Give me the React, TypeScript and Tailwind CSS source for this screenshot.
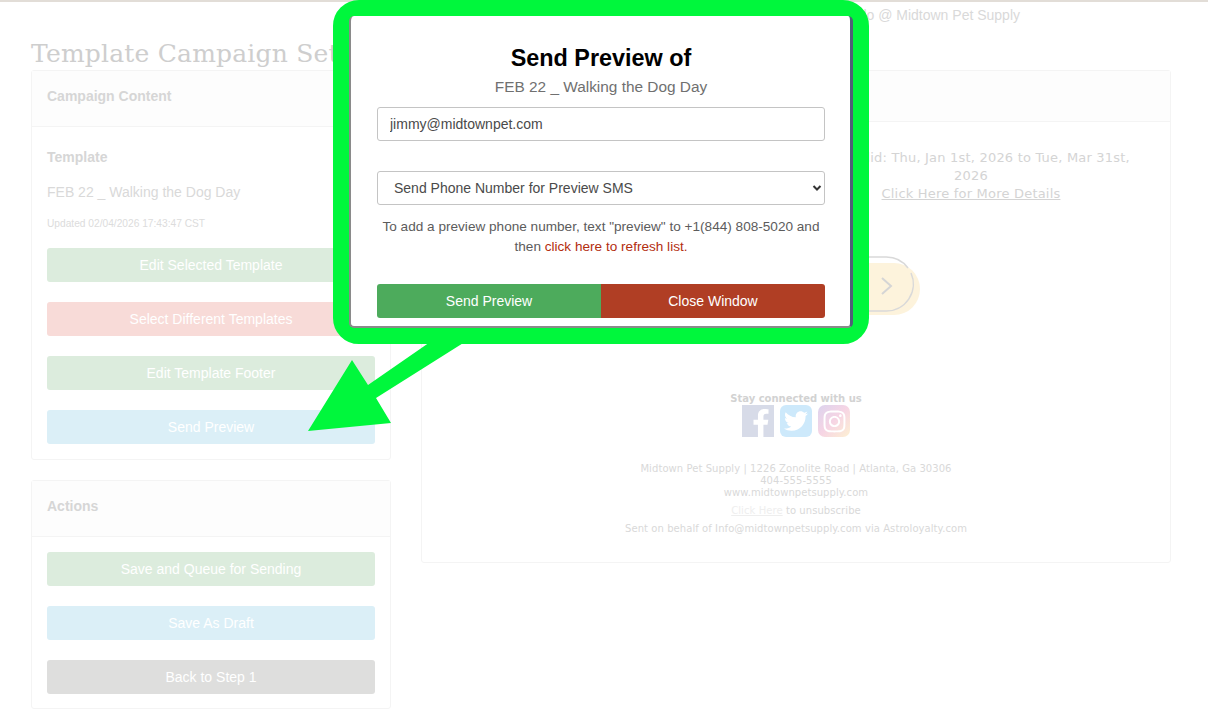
import React from 'react';
import { FaFacebookF, FaTwitter, FaInstagram } from 'react-icons/fa';

const sans = "font-['Liberation_Sans',Arial,sans-serif]";
const verdana = "font-['DejaVu_Sans',Verdana,sans-serif]";

const ActionButton: React.FC<{ label: string; className: string }> = ({ label, className }) => (
  <button className={`h-[34px] w-full rounded-[3px] text-sm text-white ${className}`}>{label}</button>
);

const CardHeader: React.FC<{ title?: string; className?: string }> = ({ title, className }) => (
  <div className={`flex items-center border-b border-[#f4f4f4] bg-[#fdfdfd] px-[15px] text-sm font-bold text-[#d6d6d6] ${className}`}>
    {title}
  </div>
);

const SocialIcons = () => (
  <div className="flex justify-center gap-[6px]">
    <div className="flex h-[32px] w-[32px] items-end justify-center overflow-hidden bg-[#d7dbe8] text-white">
      <FaFacebookF className="ml-[6px] h-[28px] w-[28px]" />
    </div>
    <div className="flex h-[32px] w-[32px] items-center justify-center rounded-[6px] bg-[#cde9fb] text-white">
      <FaTwitter className="h-[24px] w-[24px]" />
    </div>
    <div className="flex h-[32px] w-[32px] items-center justify-center rounded-[7px] bg-gradient-to-br from-[#dcd3ee] via-[#f6d5e4] to-[#fdf0d2] text-white">
      <FaInstagram className="h-[25px] w-[25px]" />
    </div>
  </div>
);

const PreviewModal = () => (
  <div className={`absolute left-[333px] top-0 h-[344px] w-[536px] rounded-[26px] border-[16px] border-[#00f73c] bg-[#00f73c] ${sans}`}>
    <div className="h-full w-full rounded-[5px] border-b-2 border-l-2 border-r-[3px] border-b-[#8a8a8a] border-l-[#8a8a8a] border-r-[#4f6078] bg-white pl-[26px] pr-[25px] pt-[26px]">
      <h2 className="text-center text-[23.4px] leading-[32px] font-bold text-black">Send Preview of</h2>
      <p className="mt-[2px] text-center text-[15.4px] leading-[22px] text-[#707070]">FEB 22 _ Walking the Dog Day</p>
      <input
        readOnly
        value="jimmy@midtownpet.com"
        className="mt-[9px] h-[34px] w-full rounded-[3px] border border-[#c4c4c4] px-3 text-sm text-[#4a4a4a]"
      />
      <div className="relative mt-[30px]">
        <select className="h-[34px] w-full appearance-none rounded-[3px] border border-[#c4c4c4] bg-white px-4 text-sm text-[#4a4a4a]">
          <option>Send Phone Number for Preview SMS</option>
        </select>
        <svg className="absolute right-[3px] top-[12px] h-[10px] w-[10px]" viewBox="0 0 10 10" fill="none" stroke="#333" strokeWidth="2">
          <path d="M1.5 3 L5 6.5 L8.5 3" />
        </svg>
      </div>
      <p className="mt-[12px] text-center text-[13.6px] leading-[20px] text-[#5c5c5c]">
        To add a preview phone number, text "preview" to +1(844) 808-5020 and then{' '}
        <span className="text-[#b32d10]">click here to refresh list.</span>
      </p>
      <div className="mt-[27px] flex h-[34px] overflow-hidden rounded-[3px] text-sm text-white">
        <button className="flex-1 bg-[#4dab5c]">Send Preview</button>
        <button className="flex-1 bg-[#b03e24]">Close Window</button>
      </div>
    </div>
  </div>
);

export default function App() {
  return (
    <div className={`relative h-[714px] w-[1208px] overflow-hidden bg-white ${sans}`}>
      <div className="h-[2px] bg-[#e2ddd7]" />
      <div className="flex h-[26px] items-center justify-end pr-[188px] text-sm text-[#d9d9d9]">
        Hello @ Midtown Pet Supply
      </div>
      <div className="px-[31px]">
        <h1 className="h-[42px] pt-[9px] font-['DejaVu_Serif',serif] text-[25px] leading-[33px] tracking-[0.2px] text-[#cecece]">
          Template Campaign Setup
        </h1>
        <div className="flex gap-[30px]">
          <div className="flex w-[360px] flex-col gap-[20px]">
            <section className="h-[390px] rounded-[3px] border border-[#f4f4f4]">
              <CardHeader title="Campaign Content" className="h-[56px] pb-[6px]" />
              <div className="px-[15px] pt-[21px]">
                <h3 className="text-sm leading-[18px] font-bold text-[#d6d6d6]">Template</h3>
                <p className="mt-[17px] text-sm leading-[18px] text-[#d9d9d9]">FEB 22 _ Walking the Dog Day</p>
                <p className="mt-[17px] text-[10.2px] leading-[12px] text-[#dcdcdc]">Updated 02/04/2026 17:43:47 CST</p>
                <div className="mt-[18px] flex flex-col gap-[20px]">
                  <ActionButton label="Edit Selected Template" className="bg-[#dcecdd]" />
                  <ActionButton label="Select Different Templates" className="bg-[#f8dbd8]" />
                  <ActionButton label="Edit Template Footer" className="bg-[#dcecdd]" />
                  <ActionButton label="Send Preview" className="bg-[#dbeff7]" />
                </div>
              </div>
            </section>
            <section className="h-[229px] rounded-[3px] border border-[#f4f4f4]">
              <CardHeader title="Actions" className="h-[56px] pb-[6px]" />
              <div className="flex flex-col gap-[20px] px-[15px] pt-[15px]">
                <ActionButton label="Save and Queue for Sending" className="bg-[#dcecdd]" />
                <ActionButton label="Save As Draft" className="bg-[#dbeff7]" />
                <ActionButton label="Back to Step 1" className="bg-[#dededd]" />
              </div>
            </section>
          </div>

          <section className={`h-[493px] w-[750px] rounded-[3px] border border-[#f4f4f4] ${verdana}`}>
            <CardHeader className="h-[51px]" />
            <div className="flex justify-end pr-[29px] pt-[27px]">
              <div className="w-[340px] text-center text-[13px] leading-[18px] tracking-[0.2px] text-[#d4d4d4]">
                <p>Offer Valid: Thu, Jan 1st, 2026 to Tue, Mar 31st, 2026</p>
                <a className="underline">Click Here for More Details</a>
              </div>
            </div>
            <div className="flex justify-end pr-[250px] pt-[53px]">
              <svg className="h-[60px] w-[80px]" viewBox="0 0 80 60" fill="none">
                <rect x="0" y="7" width="80" height="52" rx="26" fill="#fdf3dc" />
                <path d="M0 1 H46 A27 27 0 0 1 68 12 M71 17 A27 27 0 0 1 46 55 H0" stroke="#d9d9d9" strokeWidth="1.5" />
                <path d="M42 22 L51 30 L42 38" stroke="#d5d5d5" strokeWidth="2" />
              </svg>
            </div>
            <div className="pt-[76px] text-center">
              <p className="text-[10px] leading-[13px] font-bold text-[#d2d2d2]">Stay connected with us</p>
              <SocialIcons />
              <div className="mt-[26px] text-[10px] leading-[12px] tracking-[0.07px] text-[#d9d9d9]">
                <p>Midtown Pet Supply | 1226 Zonolite Road | Atlanta, Ga 30306</p>
                <p>404-555-5555</p>
                <p>www.midtownpetsupply.com</p>
                <p className="mt-[6px]">
                  <a className="text-[#eeeeee] underline">Click Here</a> to unsubscribe
                </p>
                <p className="mt-[6px]">Sent on behalf of Info@midtownpetsupply.com via Astroloyalty.com</p>
              </div>
            </div>
          </section>
        </div>
      </div>

      <PreviewModal />
      <svg className="absolute left-[300px] top-[340px] h-[100px] w-[170px]" viewBox="300 340 170 100" fill="#00f73c">
        <path d="M433 340 L368 385 L352 360 L308 431 L391 423 L376 398 L468 340 Z" />
      </svg>
    </div>
  );
}
